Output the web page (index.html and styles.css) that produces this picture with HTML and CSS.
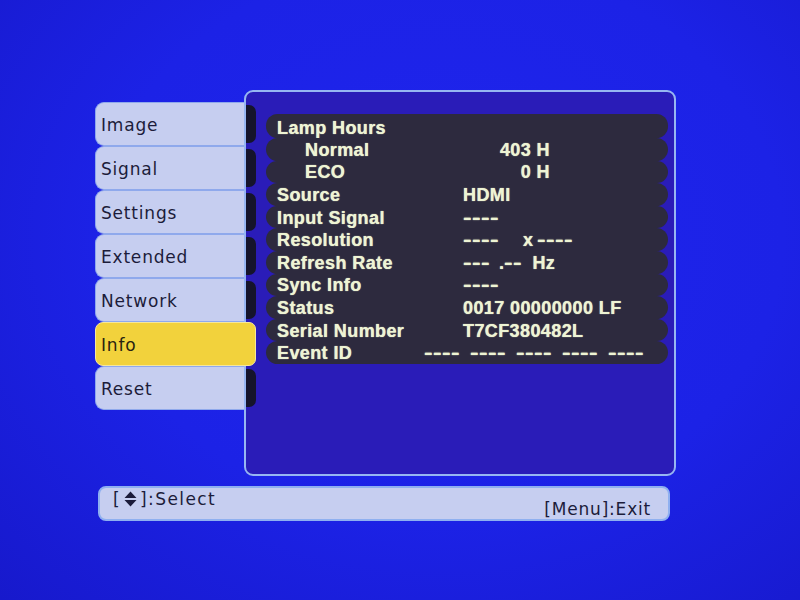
FILE: index.html
```html
<!DOCTYPE html>
<html>
<head>
<meta charset="utf-8">
<link rel="stylesheet" href="styles.css">
</head>
<body>
<div class="screen">
  <div class="main">
    <div class="tabs">
      <div class="tab"><div class="tab-label">Image</div><div class="tab-gap"></div><div class="tab-shadow"></div></div>
      <div class="tab"><div class="tab-label">Signal</div><div class="tab-gap"></div><div class="tab-shadow"></div></div>
      <div class="tab"><div class="tab-label">Settings</div><div class="tab-gap"></div><div class="tab-shadow"></div></div>
      <div class="tab"><div class="tab-label">Extended</div><div class="tab-gap"></div><div class="tab-shadow"></div></div>
      <div class="tab"><div class="tab-label">Network</div><div class="tab-gap"></div><div class="tab-shadow"></div></div>
      <div class="tab active"><div class="tab-label">Info</div></div>
      <div class="tab"><div class="tab-label">Reset</div><div class="tab-gap"></div><div class="tab-shadow"></div></div>
    </div>
    <div class="panel">
      <div class="rows">
        <div class="row"><span class="label">Lamp Hours</span></div>
        <div class="row"><span class="label sub">Normal</span><span class="val num">403 H</span></div>
        <div class="row"><span class="label sub">ECO</span><span class="val num">0 H</span></div>
        <div class="row"><span class="label">Source</span><span class="val">HDMI</span></div>
        <div class="row"><span class="label">Input Signal</span><span class="val"><span class="dash d4">----</span></span></div>
        <div class="row"><span class="label">Resolution</span><span class="val"><span class="dash d4">----</span><span class="res-x">x</span><span class="dash d4">----</span></span></div>
        <div class="row"><span class="label">Refresh Rate</span><span class="val"><span class="dash d3">---</span><span class="dot">.</span><span class="dash d2">--</span><span class="hz">Hz</span></span></div>
        <div class="row"><span class="label">Sync Info</span><span class="val"><span class="dash d4">----</span></span></div>
        <div class="row"><span class="label">Status</span><span class="val">0017 00000000 LF</span></div>
        <div class="row"><span class="label">Serial Number</span><span class="val">T7CF380482L</span></div>
        <div class="row event"><span class="label">Event ID</span><span class="val events"><span class="dash d4">----</span><span class="dash d4">----</span><span class="dash d4">----</span><span class="dash d4">----</span><span class="dash d4">----</span></span></div>
      </div>
    </div>
  </div>
  <div class="footer">
    <span class="hint left">[<svg class="updown" width="13" height="16" viewBox="0 0 13 16"><path d="M0.5 7 L6.5 0.5 L12.5 7 Z M0.5 9 L6.5 15.5 L12.5 9 Z" fill="#1c1c3a"/></svg>]:Select</span>
    <span class="hint right">[Menu]:Exit</span>
  </div>
</div>
</body>
</html>
```

FILE: styles.css
```css
html, body {
  margin: 0;
  padding: 0;
}
body {
  width: 800px;
  height: 600px;
  overflow: hidden;
  background: radial-gradient(ellipse at 55% 40%, #1f25ee 0%, #1c22e6 55%, #1719cc 100%);
  font-family: "DejaVu Sans", "Liberation Sans", sans-serif;
}
.screen {
  padding: 90px 0 0 95px;
  display: flex;
  flex-direction: column;
}
.main {
  display: flex;
  align-items: flex-start;
}
.tabs {
  margin-top: 12px;
  width: 161px;
  margin-right: -12px;
  position: relative;
  z-index: 1;
  display: flex;
  flex-direction: column;
}
.tab {
  display: flex;
  height: 44px;
}
.tab-label {
  width: 149px;
  box-sizing: border-box;
  background: #c6cef0;
  border: 1px solid #8fa9ec;
  border-right: none;
  border-radius: 9px 0 0 9px;
  padding: 2px 0 0 5px;
  display: flex;
  align-items: center;
  font-size: 17px;
  letter-spacing: 0.8px;
  color: #1c1c3a;
}
.tab-gap {
  width: 2px;
}
.tab-shadow {
  width: 10px;
  margin: 3px 0;
  background: #15142b;
  border-radius: 0 7px 7px 0;
}
.tab.active .tab-label {
  width: 161px;
  background: #f2d23c;
  border: 1px solid #f7e79a;
  border-radius: 8px 7px 7px 8px;
  color: #2a2210;
}
.panel {
  width: 432px;
  height: 386px;
  box-sizing: border-box;
  background: #2a1cb8;
  border: 2px solid #97b6f2;
  border-radius: 9px;
  padding: 22px 6px 0 20px;
}
.rows {
  display: flex;
  flex-direction: column;
}
.row {
  box-sizing: border-box;
  height: 22.6px;
  background: #2d2a3e;
  border-radius: 11.5px;
  display: flex;
  align-items: center;
  padding-top: 1px;
  font-family: "Liberation Sans", Arial, sans-serif;
  font-weight: bold;
  font-size: 18px;
  line-height: 20px;
  letter-spacing: 0.4px;
  color: #eef4d4;
  text-shadow: 0 0 1px #eef4d4;
  white-space: pre;
}
.row:first-child {
  padding-top: 4px;
  height: 24px;
}
.label {
  width: 186px;
  padding-left: 11px;
}
.label.sub {
  width: 158px;
  padding-left: 39px;
}
.val {
  display: flex;
  align-items: center;
  height: 20px;
}
.val.num {
  width: 87px;
  justify-content: flex-end;
}
.dash {
  display: inline-block;
  letter-spacing: 0.3px;
  transform: scaleX(1.43);
  transform-origin: left center;
}
.dash.d4 {
  margin-right: 10.8px;
}
.dash.d3 {
  margin-right: 8.1px;
}
.dash.d2 {
  margin-right: 5.4px;
}
.res-x {
  margin: 0 4px 0 24px;
}
.dot {
  margin: 0 0 0 9px;
}
.hz {
  margin-left: 10px;
}
.row.event .label {
  width: 147px;
}
.events {
  gap: 10px;
}
.footer {
  margin: 10px 0 0 3px;
  width: 572px;
  height: 35px;
  box-sizing: border-box;
  background: #c6cef0;
  border: 2px solid #8fb0f0;
  border-radius: 8px;
  display: flex;
  justify-content: space-between;
  padding: 0 17px 0 13px;
  font-size: 17px;
  letter-spacing: 1.1px;
  color: #1c1c3a;
}
.hint.left {
  align-self: flex-start;
  margin-top: 1px;
  display: flex;
  align-items: center;
  letter-spacing: 1.4px;
}
.hint.right {
  align-self: flex-end;
  letter-spacing: 0.8px;
}
.updown {
  margin: 0 3px;
}
```
